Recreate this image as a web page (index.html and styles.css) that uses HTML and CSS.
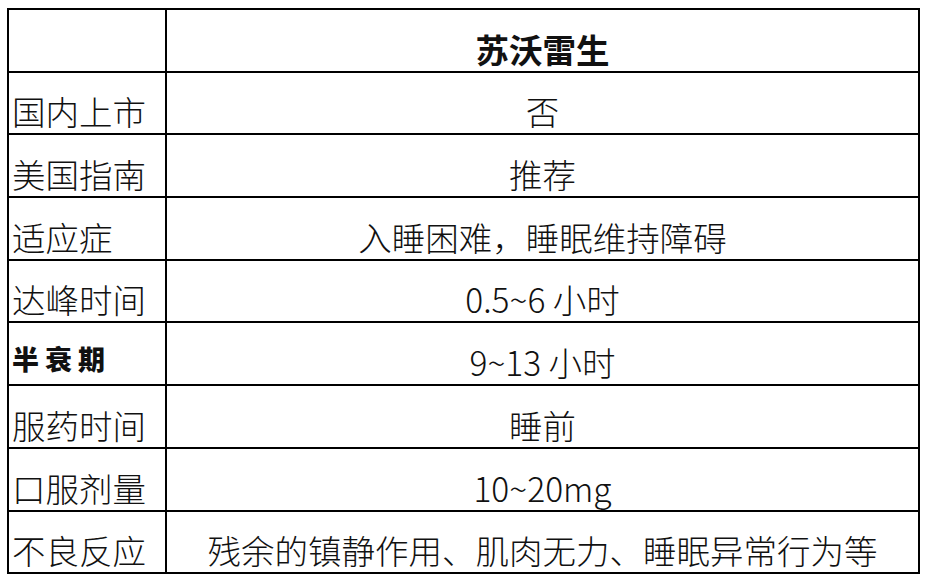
FILE: index.html
```html
<!DOCTYPE html>
<html lang="zh-CN">
<head>
<meta charset="utf-8">
<link rel="stylesheet" href="styles.css">
</head>
<body>
<table class="drug">
  <tr class="head"><td class="label"></td><td class="value name">苏沃雷生</td></tr>
  <tr><td class="label">国内上市</td><td class="value">否</td></tr>
  <tr><td class="label">美国指南</td><td class="value">推荐</td></tr>
  <tr><td class="label">适应症</td><td class="value">入睡困难，睡眠维持障碍</td></tr>
  <tr><td class="label">达峰时间</td><td class="value">0.5~6 小时</td></tr>
  <tr><td class="label heavy">半衰期</td><td class="value">9~13 小时</td></tr>
  <tr><td class="label">服药时间</td><td class="value">睡前</td></tr>
  <tr><td class="label">口服剂量</td><td class="value">10~20mg</td></tr>
  <tr><td class="label">不良反应</td><td class="value">残余的镇静作用、肌肉无力、睡眠异常行为等</td></tr>
</table>
</body>
</html>
```
FILE: styles.css
```css
html, body {
  margin: 0;
  padding: 0;
  background: #ffffff;
}
body {
  font-family: "Noto Sans CJK SC", "Noto Sans", sans-serif;
  color: #111;
}
.drug {
  border-collapse: collapse;
  margin: 8px 0 0 7px;
  width: 913px;
}
.drug td {
  border: 2px solid #000;
  height: 62.7px;
  padding: 0 0 4px 3px;
  vertical-align: bottom;
  font-size: 33.5px;
  font-weight: 300;
  line-height: 36px;
  box-sizing: border-box;
}
.drug td.label {
  width: 158px;
  text-align: left;
  white-space: nowrap;
}
.drug td.value {
  text-align: center;
  padding-left: 0;
}
.drug td.name {
  font-weight: 700;
}
.drug td.heavy {
  font-size: 27px;
  font-weight: 900;
  letter-spacing: 6px;
  padding-bottom: 7px;
}
```
